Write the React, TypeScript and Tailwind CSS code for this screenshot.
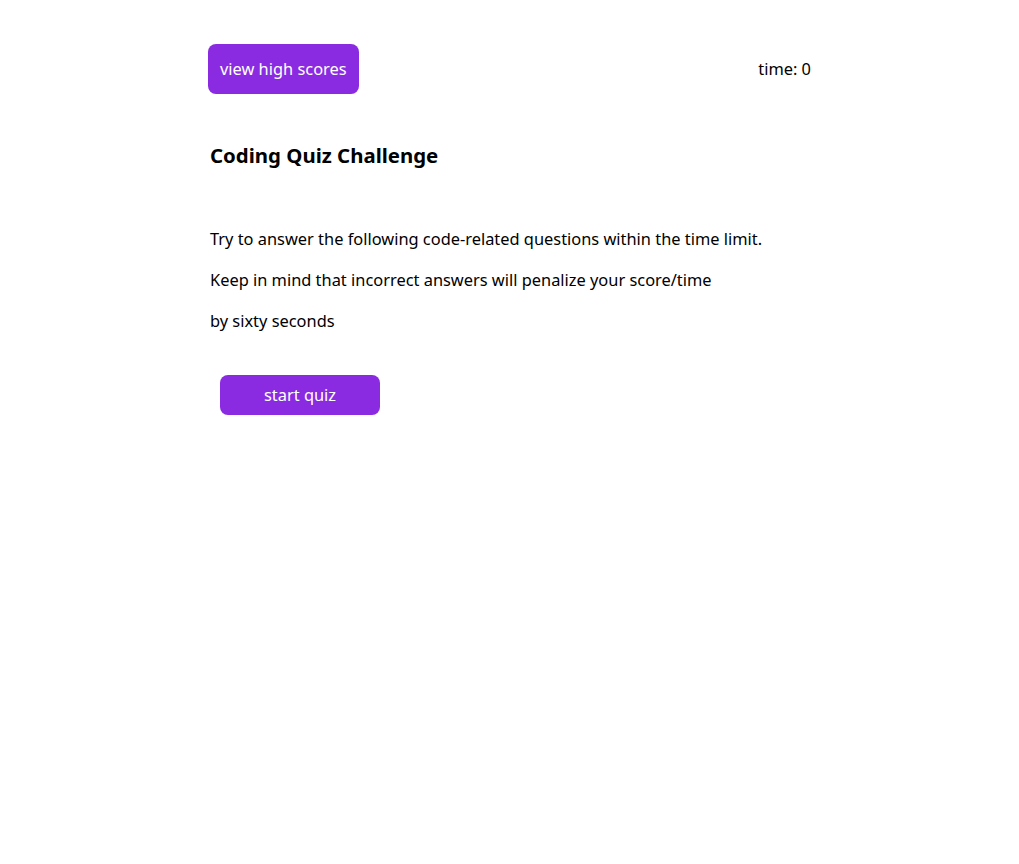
export default function App() {
  return (
    <div className="min-h-screen bg-white text-black font-['Noto_Sans',sans-serif]">
      <div className="mx-auto w-[603px] pt-[44px]">
        <header className="flex items-center justify-between">
          <button className="h-[50px] rounded-lg bg-[#8a2be2] px-3 text-[16.4px] text-white">
            view high scores
          </button>
          <span className="text-[16.4px]">time: 0</span>
        </header>

        <main className="mt-[46px] pl-[2px]">
          <h1 className="text-[20.4px] font-bold leading-[30px]">Coding Quiz Challenge</h1>
          <div className="mt-[57px] flex flex-col gap-[17px] text-[16.4px] leading-6">
            <p>Try to answer the following code-related questions within the time limit.</p>
            <p>Keep in mind that incorrect answers will penalize your score/time</p>
            <p>by sixty seconds</p>
          </div>
          <button className="ml-[10px] mt-[42px] h-10 w-40 rounded-lg bg-[#8a2be2] text-[16.4px] text-white">
            start quiz
          </button>
        </main>
      </div>
    </div>
  );
}
